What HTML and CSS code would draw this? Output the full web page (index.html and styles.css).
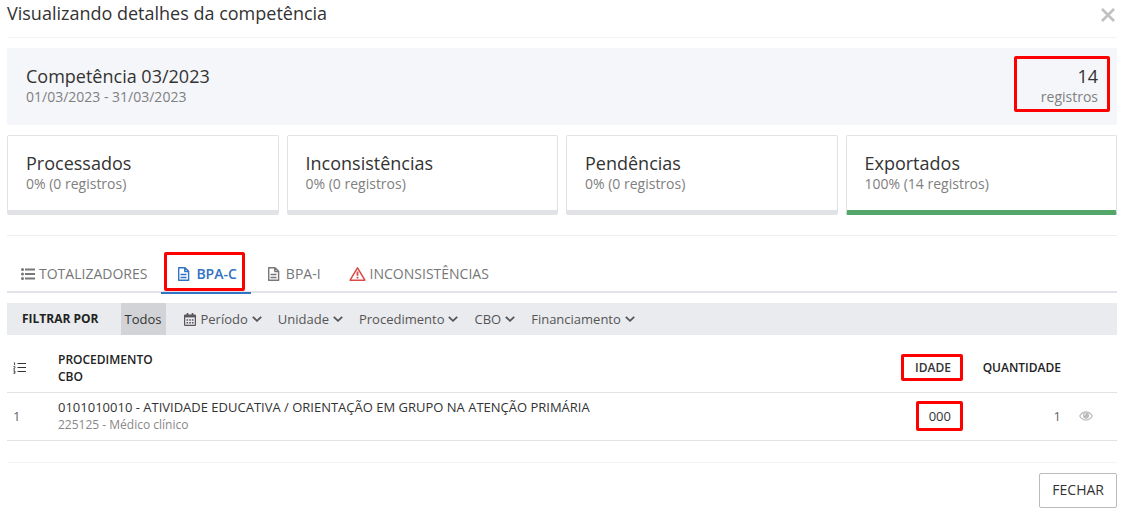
FILE: index.html
```html
<!DOCTYPE html>
<html lang="pt-BR">
<head>
<meta charset="utf-8">
<title>Visualizando detalhes da competência</title>
<link rel="stylesheet" href="styles.css">
</head>
<body>
<main class="modal">
  <header class="modal-header">
    <h1 class="modal-title">Visualizando detalhes da competência</h1>
    <button class="close" type="button" aria-label="Fechar janela">
      <svg width="14" height="14" viewBox="0 0 14 14"><path d="M1 1 13 13M13 1 1 13" fill="none" stroke="#c0c0c0" stroke-width="2.600"/></svg>
    </button>
  </header>

  <section class="summary">
    <div>
      <h2 class="heading">Competência 03/2023</h2>
      <p class="detail">01/03/2023 - 31/03/2023</p>
    </div>
    <div class="total marked mark-total">
      <p class="heading">14</p>
      <p class="detail">registros</p>
    </div>
  </section>

  <section class="cards">
    <article class="card"><h2 class="heading">Processados</h2><p class="detail">0% (0 registros)</p></article>
    <article class="card"><h2 class="heading">Inconsistências</h2><p class="detail">0% (0 registros)</p></article>
    <article class="card"><h2 class="heading">Pendências</h2><p class="detail">0% (0 registros)</p></article>
    <article class="card card-done"><h2 class="heading">Exportados</h2><p class="detail">100% (14 registros)</p></article>
  </section>

  <nav class="tabs">
    <button class="tab" type="button">
      <svg width="14" height="12" viewBox="0 0 14 12" fill="currentColor"><circle cx="1.500" cy="1.500" r="1.500"/><circle cx="1.500" cy="6" r="1.500"/><circle cx="1.500" cy="10.500" r="1.500"/><path d="M4 .6h10v1.800H4zM4 5.100h10v1.800H4zM4 9.600h10v1.800H4z"/></svg>
      TOTALIZADORES
    </button>
    <button class="tab tab-active marked mark-tab" type="button">
      <svg class="doc" width="18" height="14" viewBox="0 0 18 14" fill="none" stroke="currentColor"><path d="M3.700.7h6.300l3.600 3.600v9h-9.900zM9.800.7v3.800h3.800" stroke-width="1.400" stroke-linejoin="round"/><path d="M5.500 7.500h6M5.500 10.500h6" stroke-width="1.300"/></svg>
      BPA-C
    </button>
    <button class="tab" type="button">
      <svg class="doc" width="18" height="14" viewBox="0 0 18 14" fill="none" stroke="currentColor"><path d="M3.700.7h6.300l3.600 3.600v9h-9.900zM9.800.7v3.800h3.800" stroke-width="1.400" stroke-linejoin="round"/><path d="M5.500 7.500h6M5.500 10.500h6" stroke-width="1.300"/></svg>
      BPA-I
    </button>
    <button class="tab" type="button">
      <svg class="alert" width="17" height="14" viewBox="0 0 17 14" fill="none" stroke="currentColor"><path d="M8.500.9 15.900 13.200H1.100z" stroke-width="1.500" stroke-linejoin="round"/><path d="M8.500 4.400v4.400M8.500 9.800v1.700" stroke-width="1.800"/></svg>
      INCONSISTÊNCIAS
    </button>
  </nav>

  <div class="filters">
    <span class="filters-label">FILTRAR POR</span>
    <button class="all" type="button">Todos</button>
    <button class="filter" type="button">
      <svg class="calendar" width="12" height="13" viewBox="0 0 12 13" fill="none" stroke="#5a5458"><path d="M1.200 2.200h9.600q.6 0 .6.600v9q0 .6-.6.600H1.200q-.6 0-.6-.6v-9q0-.6.600-.6z" stroke-width="1.200"/><path d="M.6 3.300h10.800" stroke-width="2.200"/><path d="M3.500 0v2.500M8.500 0v2.500" stroke-width="1.600"/><path d="M2.500 7h7M2.500 9.800h7" stroke-width="1.500" stroke-dasharray="1.600 1.100"/></svg>
      Período
      <svg width="10" height="6" viewBox="0 0 10 6"><path d="m.8.8 4.200 4 4.200-4" fill="none" stroke="currentColor" stroke-width="1.800"/></svg>
    </button>
    <button class="filter" type="button">Unidade <svg width="10" height="6" viewBox="0 0 10 6"><path d="m.8.8 4.200 4 4.200-4" fill="none" stroke="currentColor" stroke-width="1.800"/></svg></button>
    <button class="filter" type="button">Procedimento <svg width="10" height="6" viewBox="0 0 10 6"><path d="m.8.8 4.200 4 4.200-4" fill="none" stroke="currentColor" stroke-width="1.800"/></svg></button>
    <button class="filter" type="button">CBO <svg width="10" height="6" viewBox="0 0 10 6"><path d="m.8.8 4.200 4 4.200-4" fill="none" stroke="currentColor" stroke-width="1.800"/></svg></button>
    <button class="filter" type="button">Financiamento <svg width="10" height="6" viewBox="0 0 10 6"><path d="m.8.8 4.200 4 4.200-4" fill="none" stroke="currentColor" stroke-width="1.800"/></svg></button>
  </div>

  <table class="records">
    <thead>
      <tr>
        <th class="col-index" aria-label="Número">
          <svg width="14" height="12" viewBox="0 0 14 12" fill="none" stroke="#333"><path d="M4.500 1.500H13M4.500 5.500H13M4.500 9.500H13" stroke-width="1.200"/><path d="M.8.8h.8v2.400M.5 4.600h1.400v1.200L.6 7.200H2M.5 8.800h1.400v2.500H.5M.8 10h1" stroke-width=".9"/></svg>
        </th>
        <th>PROCEDIMENTO<br>CBO</th>
        <th class="col-age"><span class="marked mark-age">IDADE</span></th>
        <th class="col-amount">QUANTIDADE</th>
        <th class="col-view" aria-label="Ações"></th>
      </tr>
    </thead>
    <tbody>
      <tr>
        <td class="col-index">1</td>
        <td><div class="procedure">0101010010 - ATIVIDADE EDUCATIVA / ORIENTAÇÃO EM GRUPO NA ATENÇÃO PRIMÁRIA</div><div class="occupation">225125 - Médico clínico</div></td>
        <td class="col-age"><span class="marked mark-value">000</span></td>
        <td class="col-amount">1</td>
        <td class="col-view">
          <button class="view" type="button" aria-label="Visualizar">
            <svg width="14" height="10" viewBox="0 0 14 10"><path d="M.7 5Q3.200.9 7 .9T13.300 5Q10.800 9.100 7 9.100T.7 5z" fill="none" stroke="#bbb" stroke-width="1.200"/><circle cx="7" cy="4.600" r="3.100" fill="#bbb"/><path d="M5.200 4.600A1.800 1.800 0 0 1 7 2.800" fill="none" stroke="#fff" stroke-width=".8"/></svg>
          </button>
        </td>
      </tr>
    </tbody>
  </table>

  <footer class="modal-footer">
    <button class="dismiss" type="button">FECHAR</button>
  </footer>
</main>
</body>
</html>
```
FILE: styles.css
```css
* { box-sizing: border-box; }

body {
  margin: 0;
  background: #fff;
  color: #333;
  font-family: "Open Sans", "Noto Sans", sans-serif;
  font-size: 14px;
  line-height: 20px;
}

h1, h2, p { margin: 0; font-weight: 400; }
svg { display: block; flex: none; }

button {
  display: flex;
  align-items: center;
  margin: 0;
  padding: 0;
  border: 0;
  background: none;
  color: inherit;
  font: inherit;
  cursor: pointer;
}

.modal { padding: 0 8px 0 7px; }

.modal-header {
  display: flex;
  justify-content: space-between;
  align-items: flex-start;
  height: 38px;
  border-bottom: 1px solid #f4f4f6;
}

.modal-title { font-size: 18px; line-height: 26px; }
.close { padding: 8px 2px; }

.heading { font-size: 18px; line-height: 22px; }
.detail { color: #808080; line-height: 20px; }

.summary {
  display: flex;
  justify-content: space-between;
  margin-top: 10px;
  padding: 17px 19px 18px;
  border-radius: 2px;
  background: #f5f6fa;
}

.total { text-align: right; }

.cards {
  display: grid;
  grid-template-columns: repeat(4, 1fr);
  gap: 8px;
  padding: 10px 0 20px;
  border-bottom: 1px solid #eeeef1;
}

.card {
  padding: 16px 18px;
  border: 1px solid #e1e2e5;
  border-bottom-width: 5px;
  border-radius: 2px;
}

.card-done { border-bottom-color: #55a66b; }

.tabs {
  display: flex;
  margin-top: 20px;
  border-bottom: 2px solid #e2e3e8;
  color: #777;
}

.tab {
  gap: 4px;
  height: 35px;
  padding: 0 14px;
}

.tab-active {
  height: 38px;
  margin-bottom: -3px;
  border-bottom: 2px solid #3273c5;
  color: #3273c5;
  font-weight: 600;
}

.doc { margin-right: -1px; }
.alert { color: #db4a46; }

.filters {
  display: flex;
  gap: 16px;
  height: 32px;
  margin-top: 10px;
  padding-left: 15px;
  background: #eaebef;
  color: #555;
  font-size: 13px;
}

.filters-label {
  margin-right: 6px;
  color: #222;
  font-size: 12px;
  font-weight: 700;
  line-height: 32px;
}

.all {
  padding: 0 4px;
  background: #d2d3d7;
  color: #333;
}

.filter { gap: 4px; }
.calendar { margin-left: 2px; margin-right: 1px; }

.records {
  width: 100%;
  border-collapse: collapse;
  font-size: 13px;
  line-height: 17px;
}

.records th,
.records td {
  padding: 6px 0;
  border-bottom: 1px solid #e1e2e5;
  text-align: left;
  font-weight: 400;
}

.records th {
  height: 57px;
  padding-top: 15px;
  color: #222;
  font-size: 12px;
  font-weight: 600;
}

.records td { height: 48px; color: #666; }
.records .col-index { width: 51px; padding-left: 6px; }
.records .col-age { width: 80px; text-align: right; color: #333; }
.records .col-amount { width: 110px; text-align: right; }
.records .col-view { width: 56px; padding-left: 18px; }
.records .procedure { color: #333; }
.occupation { color: #888; font-size: 12px; }

.modal-footer {
  display: flex;
  justify-content: flex-end;
  margin-top: 21px;
  padding-top: 10px;
  border-top: 1px solid #f4f4f6;
}

.dismiss {
  height: 35px;
  padding: 0 12px;
  border: 1px solid #bbb;
  border-radius: 2px;
}

/* Red frames laid over the highlighted values */
.marked { position: relative; }

.marked::after {
  content: "";
  position: absolute;
  border: 3px solid #f00;
  border-radius: 2px;
  pointer-events: none;
}

.mark-total::after { inset: -9px -12px -5px -27px; }
.mark-tab::after { inset: -4px 6px 1px 3px; }
.mark-age::after { inset: -5px -12px -5px -14px; }
.mark-value::after { inset: -6px -12px -6px -13px; }
```
